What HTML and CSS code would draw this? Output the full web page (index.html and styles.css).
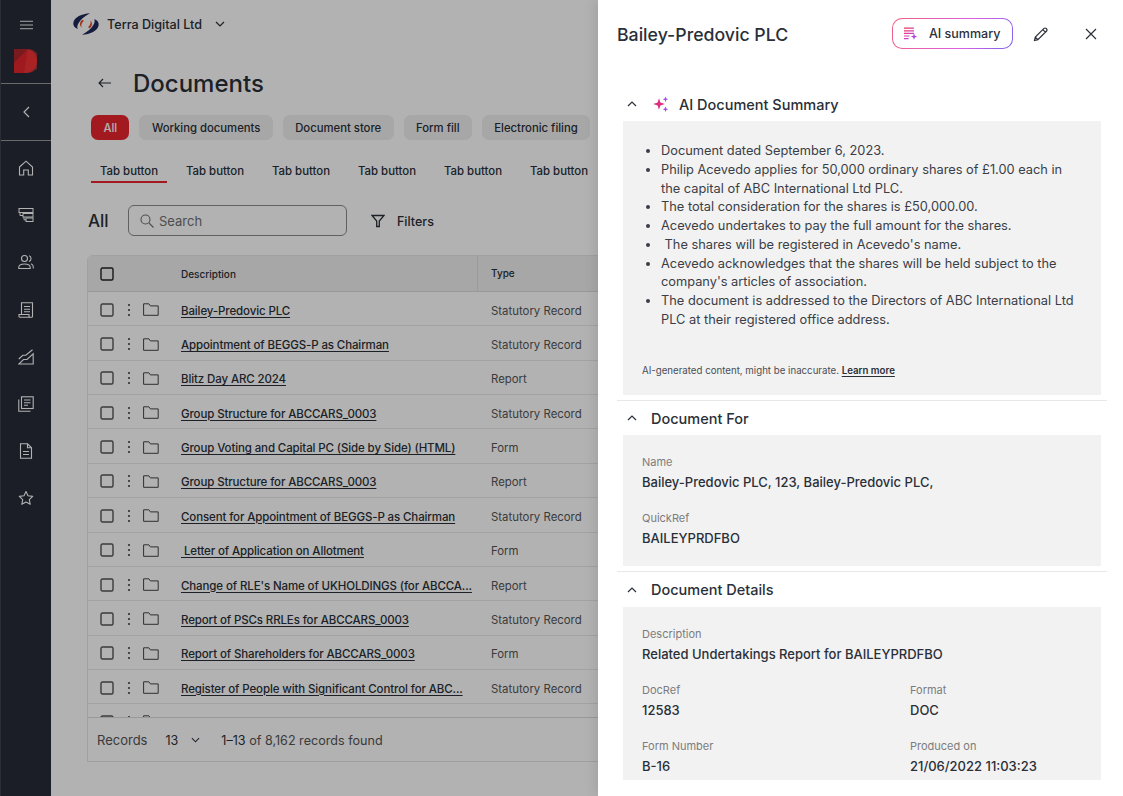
FILE: index.html
```html
<!DOCTYPE html>
<html lang="en">
<head>
<meta charset="utf-8">
<title>Documents</title>
<link rel="stylesheet" href="styles.css">
</head>
<body>
<svg class="defs" width="0" height="0" aria-hidden="true">
  <defs>
    <linearGradient id="ai" x1="0" y1="0" x2="1" y2="1"><stop offset="0" stop-color="#f0304a"/><stop offset=".55" stop-color="#d63fb8"/><stop offset="1" stop-color="#8f55f0"/></linearGradient>
    <symbol id="check" viewBox="0 0 14 14"><rect x="1" y="1" width="12" height="12" rx="1.5" fill="none" stroke="currentColor" stroke-width="1.4"/></symbol>
    <symbol id="dots" viewBox="0 0 4 14"><circle cx="2" cy="2" r="1.1"/><circle cx="2" cy="7" r="1.1"/><circle cx="2" cy="12" r="1.1"/></symbol>
    <symbol id="folder" viewBox="0 0 16 13"><path d="M.6.8h5.2l1.6 2.1h7.800v9.400H.6z" fill="none" stroke="currentColor" stroke-width="1"/></symbol>
    <symbol id="up" viewBox="0 0 10 6"><path d="M1 5l4-4 4 4" fill="none" stroke="currentColor" stroke-width="1.2"/></symbol>
  </defs>
</svg>
<div class="app">
  <aside class="rail">
    <div class="rail-top">
      <svg class="burger" viewBox="0 0 14 10" width="13" height="10"><path d="M0 1h14M0 5h14M0 9h14" stroke="#fff" stroke-width="1"/></svg>
      <svg class="brand" viewBox="0 0 23 24" width="23" height="24"><path d="M0 0h11a12 12 0 0 1 0 24H0z" fill="#e4262b"/><path d="M0 0h14L0 14z" fill="#ae262c"/><path d="M14 0a12 12 0 0 1-1 24h-3z" fill="#fb3c3c" opacity=".6"/></svg>
    </div>
    <div class="rail-collapse">
      <svg viewBox="0 0 7 12" width="7" height="12"><path d="M6 1L1 6l5 5" fill="none" stroke="#fff" stroke-width="1.2"/></svg>
    </div>
    <nav class="rail-nav">
      <svg viewBox="0 0 16 16" width="16" height="16"><path d="M1.500 7L8 1.200 14.500 7v8h-4.200v-5H5.700v5H1.500z" fill="none" stroke="#fff" stroke-width="1.100"/></svg>
      <svg viewBox="0 0 16 16" width="16" height="16"><g fill="none" stroke="#fff" stroke-width="1"><rect x="1" y="1.500" width="14" height="4"/><rect x="5" y="6.500" width="10" height="3.500"/><rect x="8" y="11" width="7" height="3.500"/><path d="M2 5.500V8.500H5M6 10v2.800h2"/></g></svg>
      <svg viewBox="0 0 16 16" width="16" height="16"><g fill="none" stroke="#fff" stroke-width="1.100"><circle cx="6.500" cy="4.500" r="3"/><path d="M.8 14.500v-1.200c0-2 2-3.300 5.700-3.300s5.700 1.300 5.700 3.300v1.200z"/><path d="M11 1.700a3 3 0 0 1 0 5.700M13 9.800c1.500.6 2.300 1.700 2.300 3.200v1.500"/></g></svg>
      <svg viewBox="0 0 16 16" width="16" height="16"><g fill="none" stroke="#fff" stroke-width="1.100"><path d="M3.500 12V.8h11V15"/><path d="M1 12.500h10v2.700H1.800c-.5 0-.8-.4-.8-1z"/><path d="M11 15.200h3.500M6 4.500h6M6 7.200h6M6 9.800h6"/></g></svg>
      <svg viewBox="0 0 16 16" width="16" height="16"><g fill="none" stroke="#fff" stroke-width="1.100"><path d="M.8 15h14.400V4.800L9 10.500H5.500L.8 15z"/><path d="M.8 10l4-3.700h3L14.500.8"/></g></svg>
      <svg viewBox="0 0 16 16" width="16" height="16"><g fill="none" stroke="#fff" stroke-width="1.100"><rect x="3.500" y=".8" width="11.700" height="11.700"/><path d="M.8 3.500v11.700h11.700M6 4h6.500M6 6.700h6.500M6 9.300h4"/></g></svg>
      <svg viewBox="0 0 16 16" width="16" height="16"><g fill="none" stroke="#fff" stroke-width="1.100"><path d="M2.500.8h7l4 4v10.400h-11z"/><path d="M9.500.8v4h4M5 8.500h6M5 11.500h6"/></g></svg>
      <svg viewBox="0 0 16 16" width="16" height="16"><path d="M8 1.500l2 4.300 4.700.6-3.400 3.200.9 4.700L8 12l-4.200 2.300.9-4.700L1.300 6.400 6 5.800z" fill="none" stroke="#fff" stroke-width="1.100" stroke-linejoin="round"/></svg>
    </nav>
  </aside>

  <main class="main">
    <header class="org">
      <svg class="org-logo" viewBox="0 0 26 24" width="26" height="22" preserveAspectRatio="none"><path d="M17 .3C9 .8 1 4.500.3 11c-.3 3.200 1.700 5.500 4.500 6.500C3 14 6 7 17 .3z" fill="#1e2a58"/><path d="M9 23.700c8-.5 16-4.200 16.700-10.700.3-3.200-1.700-5.500-4.500-6.500C23 10 20 17 9 23.700z" fill="#1e2a58"/><path d="M9.500 7.500C7 9 6 12.500 8.500 16c-.6-3 .2-5.500 2.500-7.500z" fill="#e8401c"/><path d="M16.500 16.500C19 15 20 11.500 17.500 8c.6 3-.2 5.500-2.500 7.500z" fill="#e8401c"/></svg>
      <span class="org-name">Terra Digital Ltd</span>
      <svg class="org-chev" viewBox="0 0 10 6" width="10" height="6"><path d="M1 1l4 4 4-4" fill="none" stroke="currentColor" stroke-width="1.200"/></svg>
    </header>

    <div class="title-row">
      <svg viewBox="0 0 13 10" width="13" height="10"><path d="M13 5H1M5 1L1 5l4 4" fill="none" stroke="currentColor" stroke-width="1.100"/></svg>
      <h1>Documents</h1>
    </div>

    <div class="chips">
      <span class="chip chip-on">All</span>
      <span class="chip">Working documents</span>
      <span class="chip">Document store</span>
      <span class="chip">Form fill</span>
      <span class="chip">Electronic filing</span>
    </div>

    <div class="tabs">
      <span class="tab tab-on">Tab button</span>
      <span class="tab">Tab button</span>
      <span class="tab">Tab button</span>
      <span class="tab">Tab button</span>
      <span class="tab">Tab button</span>
      <span class="tab">Tab button</span>
    </div>

    <div class="tools">
      <span class="tools-all">All</span>
      <label class="search">
        <svg viewBox="0 0 14 14" width="14" height="14"><circle cx="5.500" cy="5.500" r="4.500" fill="none" stroke="currentColor" stroke-width="1.100"/><path d="M9 9l4.500 4.500" stroke="currentColor" stroke-width="1.100"/></svg>
        <span>Search</span>
      </label>
      <span class="filters">
        <svg viewBox="0 0 14 14" width="14" height="14"><path d="M1 1.500h12L8.300 7v5.500H5.700V7z" fill="none" stroke="currentColor" stroke-width="1.300"/></svg>
        Filters
      </span>
    </div>

    <section class="table">
      <div class="row head">
        <svg class="cb cb-head"><use href="#check"/></svg>
        <span class="cell-desc">Description</span>
        <span class="cell-type">Type</span>
      </div>
      <div class="tbody">
        <div class="row"><svg class="cb"><use href="#check"/></svg><svg class="dots"><use href="#dots"/></svg><svg class="fold"><use href="#folder"/></svg><a class="cell-desc link">Bailey-Predovic PLC</a><span class="cell-type">Statutory Record</span></div>
        <div class="row"><svg class="cb"><use href="#check"/></svg><svg class="dots"><use href="#dots"/></svg><svg class="fold"><use href="#folder"/></svg><a class="cell-desc link">Appointment of BEGGS-P as Chairman</a><span class="cell-type">Statutory Record</span></div>
        <div class="row"><svg class="cb"><use href="#check"/></svg><svg class="dots"><use href="#dots"/></svg><svg class="fold"><use href="#folder"/></svg><a class="cell-desc link">Blitz Day ARC 2024</a><span class="cell-type">Report</span></div>
        <div class="row"><svg class="cb"><use href="#check"/></svg><svg class="dots"><use href="#dots"/></svg><svg class="fold"><use href="#folder"/></svg><a class="cell-desc link">Group Structure for ABCCARS_0003</a><span class="cell-type">Statutory Record</span></div>
        <div class="row"><svg class="cb"><use href="#check"/></svg><svg class="dots"><use href="#dots"/></svg><svg class="fold"><use href="#folder"/></svg><a class="cell-desc link">Group Voting and Capital PC (Side by Side) (HTML)</a><span class="cell-type">Form</span></div>
        <div class="row"><svg class="cb"><use href="#check"/></svg><svg class="dots"><use href="#dots"/></svg><svg class="fold"><use href="#folder"/></svg><a class="cell-desc link">Group Structure for ABCCARS_0003</a><span class="cell-type">Report</span></div>
        <div class="row"><svg class="cb"><use href="#check"/></svg><svg class="dots"><use href="#dots"/></svg><svg class="fold"><use href="#folder"/></svg><a class="cell-desc link">Consent for Appointment of BEGGS-P as Chairman</a><span class="cell-type">Statutory Record</span></div>
        <div class="row"><svg class="cb"><use href="#check"/></svg><svg class="dots"><use href="#dots"/></svg><svg class="fold"><use href="#folder"/></svg><a class="cell-desc link">&nbsp;Letter of Application on Allotment</a><span class="cell-type">Form</span></div>
        <div class="row"><svg class="cb"><use href="#check"/></svg><svg class="dots"><use href="#dots"/></svg><svg class="fold"><use href="#folder"/></svg><a class="cell-desc link">Change of RLE's Name of UKHOLDINGS (for ABCCA...</a><span class="cell-type">Report</span></div>
        <div class="row"><svg class="cb"><use href="#check"/></svg><svg class="dots"><use href="#dots"/></svg><svg class="fold"><use href="#folder"/></svg><a class="cell-desc link">Report of PSCs RRLEs for ABCCARS_0003</a><span class="cell-type">Statutory Record</span></div>
        <div class="row"><svg class="cb"><use href="#check"/></svg><svg class="dots"><use href="#dots"/></svg><svg class="fold"><use href="#folder"/></svg><a class="cell-desc link">Report of Shareholders for ABCCARS_0003</a><span class="cell-type">Form</span></div>
        <div class="row"><svg class="cb"><use href="#check"/></svg><svg class="dots"><use href="#dots"/></svg><svg class="fold"><use href="#folder"/></svg><a class="cell-desc link">Register of People with Significant Control for ABC...</a><span class="cell-type">Statutory Record</span></div>
        <div class="row"><svg class="cb"><use href="#check"/></svg><svg class="dots"><use href="#dots"/></svg><svg class="fold"><use href="#folder"/></svg></div>
      </div>
      <footer class="pager">
        <span class="pager-label">Records</span>
        <span class="pager-num">13</span>
        <svg viewBox="0 0 10 6" width="9" height="6"><path d="M1 1l4 4 4-4" fill="none" stroke="currentColor" stroke-width="1.200"/></svg>
        <span class="pager-info"><b>1–13</b> of 8,162 records found</span>
      </footer>
    </section>
  </main>
</div>

<div class="scrim"></div>

<aside class="drawer">
  <header class="drawer-head">
    <h2>Bailey-Predovic PLC</h2>
    <button class="ai-btn">
      <svg viewBox="0 0 14 14" width="14" height="14"><path d="M0 1.200h10M0 3.800h10M0 6.400h10M0 9h5.500M0 11.600h4.500" stroke="url(#ai)" stroke-width="1.200" fill="none"/><path d="M10 6.500l.9 2.200 2.300.9-2.300.9-.9 2.300-.9-2.300-2.300-.9 2.300-.9z" fill="#b048e0"/></svg>
      <span>AI summary</span>
    </button>
    <svg class="pencil" viewBox="0 0 16 16" width="16" height="16"><path d="M1.500 14.500l.8-3.400L11 2.400a1.400 1.400 0 0 1 2 0l.6.600a1.400 1.400 0 0 1 0 2L4.900 13.700zM9.800 3.600l2.600 2.600M2.300 11.100l2.600 2.600" fill="none" stroke="#2b2f38" stroke-width="1.200"/></svg>
    <svg class="close" viewBox="0 0 12 12" width="12" height="12"><path d="M1 1l10 10M11 1L1 11" stroke="#2b2f38" stroke-width="1.200"/></svg>
  </header>

  <section class="sec">
    <h3 class="sec-title">
      <svg class="sec-chev"><use href="#up"/></svg>
      <svg class="spark" viewBox="0 0 16 16" width="16" height="16"><path d="M6 2.200l1.400 4.200L11.800 8 7.400 9.600 6 13.800 4.600 9.600.2 8l4.400-1.600z" fill="#dc2f80"/><path d="M12.500 .5l.8 1.900 1.900.8-1.900.8-.8 1.900-.8-1.900-1.900-.8 1.900-.8zM12.500 10.500l.8 1.900 1.900.8-1.900.8-.8 1.900-.8-1.900-1.900-.8 1.900-.8z" fill="#a44ae8"/></svg>
      AI Document Summary
    </h3>
    <div class="box box-summary">
      <ul>
        <li>Document dated September 6, 2023.</li>
        <li>Philip Acevedo applies for 50,000 ordinary shares of £1.00 each in the capital of ABC International Ltd PLC.</li>
        <li>The total consideration for the shares is £50,000.00.</li>
        <li>Acevedo undertakes to pay the full amount for the shares.</li>
        <li>&nbsp;The shares will be registered in Acevedo's name.</li>
        <li>Acevedo acknowledges that the shares will be held subject to the company's articles of association.</li>
        <li>The document is addressed to the Directors of ABC International Ltd PLC at their registered office address.</li>
      </ul>
      <p class="note">AI-generated content, might be inaccurate. <a>Learn more</a></p>
    </div>
  </section>

  <section class="sec">
    <h3 class="sec-title"><svg class="sec-chev"><use href="#up"/></svg>Document For</h3>
    <div class="box box-fields">
      <div class="field"><span class="f-label">Name</span><span class="f-value">Bailey-Predovic PLC, 123, Bailey-Predovic PLC,</span></div>
      <div class="field"><span class="f-label">QuickRef</span><span class="f-value">BAILEYPRDFBO</span></div>
    </div>
  </section>

  <section class="sec sec-last">
    <h3 class="sec-title"><svg class="sec-chev"><use href="#up"/></svg>Document Details</h3>
    <div class="box box-grid">
      <div class="field field-wide"><span class="f-label">Description</span><span class="f-value">Related Undertakings Report for BAILEYPRDFBO</span></div>
      <div class="field"><span class="f-label">DocRef</span><span class="f-value">12583</span></div>
      <div class="field"><span class="f-label">Format</span><span class="f-value">DOC</span></div>
      <div class="field"><span class="f-label">Form Number</span><span class="f-value">B-16</span></div>
      <div class="field"><span class="f-label">Produced on</span><span class="f-value">21/06/2022 11:03:23</span></div>
    </div>
  </section>
</aside>
</body>
</html>
```

FILE: styles.css
```css
* { box-sizing: border-box; }
html, body { margin: 0; height: 100%; overflow: hidden; }
body { font-family: Inter, "Noto Sans", sans-serif; color: #2a2f38; background: #fff; position: relative; }
.defs { position: absolute; }
h1, h2, h3, p, ul { margin: 0; padding: 0; font-weight: 500; }

.app { display: flex; height: 796px; }

/* rail */
.rail { width: 51px; flex: none; background: #272c37; border-left: 1px solid #3d414a; display: flex; flex-direction: column; }
.rail-top { height: 84px; border-bottom: 1px solid #9a9a9a; display: flex; flex-direction: column; align-items: center; padding-top: 20px; }
.brand { margin-top: 19px; margin-right: 1px; }
.rail-collapse { height: 57px; border-bottom: 1px solid #9a9a9a; display: flex; align-items: center; justify-content: center; }
.rail-nav { display: flex; flex-direction: column; align-items: center; gap: 31.2px; padding-top: 19px; }

/* main */
.main { flex: 1; min-width: 0; padding-left: 37px; overflow: hidden; background: #fff; }
.org { height: 48px; display: flex; align-items: center; margin-left: -15px; }
.org-logo { margin-right: 8px; }
.org-name { font-size: 12.600px; font-weight: 500; }
.org-chev { margin-left: 13px; }

.title-row { display: flex; align-items: center; height: 42px; margin-top: 14px; padding-left: 10px; }
.title-row h1 { font-size: 24px; font-weight: 500; margin-left: 22px; }

.chips { display: flex; gap: 10px; margin-top: 11px; padding-left: 3px; }
.chip { height: 25px; line-height: 26px; padding: 0 12.400px; border-radius: 7px; background: #efefef; font-size: 11.300px; font-weight: 500; white-space: nowrap; }
.chip-on { background: #e8262f; color: #fff; }

.tabs { display: flex; margin-top: 18px; padding-left: 3px; }
.tab { width: 76px; margin-right: 10px; height: 25px; line-height: 26px; text-align: center; font-size: 11.400px; font-weight: 500; white-space: nowrap; }
.tab-on { border-bottom: 2.500px solid #e8262f; }

.tools { display: flex; align-items: center; margin-top: 22px; height: 31px; }
.tools-all { font-size: 17px; font-weight: 500; width: 40px; }
.search { width: 219px; height: 31px; border: 1px solid #8a8a8a; border-radius: 6px; display: flex; align-items: center; gap: 5px; padding-left: 11px; color: #6f6f6f; font-size: 13px; }
.filters { display: flex; align-items: center; gap: 12px; margin-left: 24px; padding-top: 1px; font-size: 12.500px; font-weight: 500; }

.table { margin: 19px 0 0 -1px; width: 1016px; height: 507px; border: 1px solid #e6e6e6; border-radius: 6px 6px 0 0; display: flex; flex-direction: column; overflow: hidden; background: #fff; }
.row { display: flex; align-items: center; height: 34.360px; padding-top: 2px; border-bottom: 1px solid #e8e8e8; flex: none; }
.head { height: 36px; padding-top: 0; background: #efefef; border-bottom: 1px solid #dcdcdc; }
.cb { width: 14px; height: 14px; margin-left: 12px; flex: none; color: #555; }
.cb-head { color: #222; }
.dots { width: 4px; height: 14px; margin-left: 13px; flex: none; fill: #444; }
.fold { width: 16px; height: 13px; margin-left: 12px; flex: none; color: #444; }
.cell-desc { width: 297px; margin-left: 22px; padding: 2px 12px 0 0; font-size: 11.500px; letter-spacing: -.12px; font-weight: 500; flex: none; white-space: nowrap; overflow: hidden; }
.link { text-decoration: underline; text-underline-offset: 2px; text-decoration-thickness: 1px; }
.cell-type { margin-left: 13px; padding-top: 2px; font-size: 11.400px; color: #555; white-space: nowrap; }
.head .cell-desc { width: 296px; margin-left: 67px; padding: 0; font-size: 10px; letter-spacing: 0; }
.head .cell-type { margin-left: 0; padding: 0 0 0 13px; border-left: 1px solid #ddd; font-size: 10px; font-weight: 500; color: #2a2f38; line-height: 35px; }
.tbody { height: 425px; overflow: hidden; flex: none; }
.pager { border-top: 1px solid #dcdcdc; flex: 1; display: flex; align-items: center; padding: 1px 0 0 9px; font-size: 13px; color: #555; }
.pager-num { margin-left: 18px; color: #2a2f38; font-size: 12.500px; font-weight: 400; }
.pager svg { margin-left: 13px; color: #2a2f38; }
.pager-info { margin-left: 21px; font-size: 12.600px; }
.pager-info b { font-weight: 400; color: #2a2f38; }

/* overlay */
.scrim { position: absolute; inset: 0; background: rgba(0, 0, 0, .3); }
.drawer { position: absolute; top: 0; right: 0; bottom: 0; width: 525px; background: #fff; padding: 0 16px 0 19px; box-shadow: -4px 0 10px rgba(0, 0, 0, .08); overflow: hidden; }
.drawer-head { height: 87px; display: flex; align-items: flex-start; padding-top: 18px; }
.drawer-head h2 { font-size: 17.700px; font-weight: 500; flex: 1; line-height: 33px; }
.ai-btn { width: 121px; height: 31px; border: 1px solid transparent; border-radius: 10px; background: linear-gradient(#fff, #fff) padding-box, linear-gradient(120deg, #f0607c, #dd5fe0 60%, #7d63f0) border-box; display: flex; align-items: center; padding: 0 0 0 11px; gap: 11px; font: 500 12.500px Inter, sans-serif; color: #2a2f38; }
.pencil { margin-left: 20px; margin-top: 8px; }
.close { margin: 10px 10px 0 36px; }

.sec-title { height: 34px; display: flex; align-items: center; font-size: 14.500px; font-weight: 500; padding-left: 10px; }
.sec-chev { width: 10px; height: 6px; margin-right: 14px; flex: none; }
.spark { margin-left: 2px; margin-right: 10px; }
.sec + .sec { border-top: 1px solid #e8e8e8; margin-top: 5px; }
.sec-last .sec-title { height: 35px; }
.box { margin: 0 6px; background: #f2f2f2; padding: 19px; }
.box-summary { height: 274px; padding-top: 21px; display: flex; flex-direction: column; }
.box-summary ul { list-style: disc; padding: 0 7px 0 19px; font-size: 12.800px; line-height: 18.750px; font-weight: 400; color: #3a3e46; }
.note { margin-top: auto; font-size: 9.700px; font-weight: 400; color: #4a4e55; }
.note a { font-weight: 600; color: #2a2f38; text-decoration: underline; text-underline-offset: 2px; }
.box-fields { display: flex; flex-direction: column; gap: 18px; padding-bottom: 18px; }
.field { display: flex; flex-direction: column; gap: 2px; }
.f-label { font-size: 11px; line-height: 16px; color: #7c7c7c; }
.f-value { font-size: 13px; line-height: 20px; font-weight: 500; color: #2a2f38; }
.box-grid { display: grid; grid-template-columns: 268px 1fr; gap: 18px 0; padding-bottom: 4px; }
.field-wide { grid-column: 1 / -1; }
```
